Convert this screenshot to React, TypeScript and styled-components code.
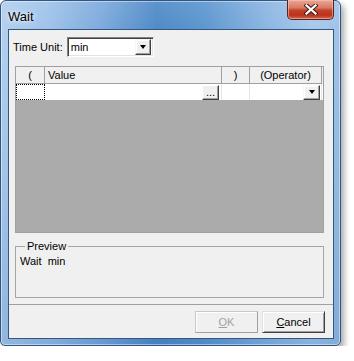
import React from "react";
import styled, { createGlobalStyle } from "styled-components";

const Global = createGlobalStyle`
  html, body { margin: 0; padding: 0; background: #ffffff; }
  body { font-family: "Liberation Sans", Arial, sans-serif; font-size: 11px; color: #000; }
  * { box-sizing: border-box; }
`;

const Window = styled.div`
  position: relative;
  width: 341px;
  height: 346px;
  display: flex;
  flex-direction: column;
  border: 1px solid #2f5785;
  border-radius: 6px 6px 5px 5px;
  background:
    linear-gradient(180deg, rgba(255,255,255,0.08) 0px, rgba(255,255,255,0) 28px, rgba(30,90,160,0.22) 100%),
    linear-gradient(90deg, #b4d0ee 0%, #a0c3ea 14%, #7daadc 30%, #508bc7 46%, #5e97d0 60%, #8cb6e2 78%, #a9caec 92%, #9fc2e8 100%);
  box-shadow: 3px 4px 6px rgba(0, 0, 0, 0.35), inset 0 0 0 1px rgba(255,255,255,0.45);
`;

const TitleBar = styled.div`
  height: 28px;
  display: flex;
  align-items: flex-start;
  justify-content: space-between;
  padding: 0 6px 0 7px;
`;

const Title = styled.span`
  font-family: "Liberation Sans", Arial, sans-serif;
  font-size: 13px;
  color: #000;
  line-height: 15px;
  padding-top: 8px;
  text-shadow: 0 0 6px rgba(255,255,255,0.9), 0 0 3px rgba(255,255,255,0.8);
`;

const CloseButton = styled.div`
  width: 47px;
  height: 20px;
  margin-top: -1px;
  display: flex;
  align-items: center;
  justify-content: center;
  border: 1px solid #5a2119;
  border-top: none;
  border-radius: 0 0 5px 5px;
  background: linear-gradient(180deg, #e8a897 0%, #d87b63 40%, #c5402a 55%, #b8321c 80%, #d06a4e 100%);
  box-shadow: inset 0 0 0 1px rgba(255, 200, 190, 0.55);
`;

const Client = styled.div`
  flex: 1;
  margin: 0 6px 6px 7px;
  display: flex;
  flex-direction: column;
  background: #f0f0f0;
  border: 1px solid #34577d;
`;

const Body = styled.div`
  flex: 1;
  display: flex;
  flex-direction: column;
  padding: 7px 9px 0 6px;
`;

const UnitRow = styled.div`
  display: flex;
  align-items: center;
  margin-left: -2px;
  gap: 4px;
`;

const Label = styled.span`
  font-size: 11px;
  line-height: 13px;
`;

const Combo = styled.div`
  width: 87px;
  height: 20px;
  display: flex;
  align-items: center;
  justify-content: space-between;
  background: #fff;
  border: 1px solid;
  border-color: #828282 #ffffff #ffffff #828282;
  box-shadow: inset 1px 1px 0 #404040, inset -1px -1px 0 #e3e3e3;
  padding: 2px 2px 2px 3px;
`;

const ComboText = styled.span`
  font-size: 11px;
  line-height: 13px;
`;

const ArrowButton = styled.div<{ $w: number; $h: number }>`
  width: ${(p) => p.$w}px;
  height: ${(p) => p.$h}px;
  display: flex;
  align-items: center;
  justify-content: center;
  background: #f0f0f0;
  border: 1px solid;
  border-color: #f8f8f8 #404040 #404040 #f8f8f8;
  box-shadow: inset -1px -1px 0 #a0a0a0, inset 1px 1px 0 #ffffff;
`;

const Triangle = styled.span`
  width: 0;
  height: 0;
  border-left: 3.5px solid transparent;
  border-right: 3.5px solid transparent;
  border-top: 4px solid #000;
`;

const Grid = styled.div`
  margin-top: 9px;
  height: 167px;
  display: flex;
  flex-direction: column;
  background: #ababab;
  border: 1px solid #a0a0a0;
`;

const GridRow = styled.div<{ $h: number; $bg: string }>`
  display: grid;
  grid-template-columns: 29px 177px 28px 72px;
  height: ${(p) => p.$h}px;
  background: ${(p) => p.$bg};
`;

const HeadCell = styled.div<{ $align: string }>`
  display: flex;
  align-items: center;
  justify-content: ${(p) => p.$align};
  padding-left: ${(p) => (p.$align === "flex-start" ? "3px" : "0")};
  border-right: 1px solid #a0a0a0;
  border-bottom: 1px solid #a0a0a0;
  font-size: 11px;
  line-height: 13px;
`;

const Cell = styled.div<{ $focus?: boolean }>`
  display: flex;
  align-items: center;
  justify-content: flex-end;
  background: #fff;
  border-right: 1px solid ${(p) => (p.$focus ? "transparent" : "#e6e6e6")};
  outline: ${(p) => (p.$focus ? "1px dotted #000" : "none")};
  outline-offset: -1px;
  padding-right: 1px;
`;

const EllipsisButton = styled.div`
  width: 17px;
  height: 15px;
  margin-right: 1px;
  display: flex;
  align-items: flex-end;
  justify-content: center;
  background: #f0f0f0;
  border: 1px solid;
  border-color: #ffffff #404040 #404040 #ffffff;
  box-shadow: inset -1px -1px 0 #a0a0a0;
  font-size: 11px;
  line-height: 11px;
  color: #000;
  padding-bottom: 1px;
`;

const Group = styled.fieldset`
  margin: 7px 0 0 0;
  padding: 0 4px;
  height: 58px;
  border: 1px solid #a5a5a5;
  border-radius: 0;
  min-width: 0;
`;

const Legend = styled.legend`
  padding: 0 2px;
  margin-left: 5px;
  font-size: 11px;
  line-height: 13px;
`;

const PreviewText = styled.div`
  font-size: 11px;
  line-height: 13px;
  white-space: pre;
  margin-top: 2px;
`;

const Footer = styled.div`
  display: flex;
  justify-content: flex-end;
  gap: 4px;
  padding: 6px 8px 5px 0;
  border-top: 1px solid #a0a0a0;
`;

const Button = styled.div<{ $disabled?: boolean }>`
  width: 63px;
  height: 22px;
  display: flex;
  align-items: center;
  justify-content: center;
  font-size: 11px;
  line-height: 13px;
  color: ${(p) => (p.$disabled ? "#a0a0a0" : "#000")};
  background: #f0f0f0;
  border: 1px solid;
  border-color: ${(p) =>
    p.$disabled ? "#c8c8c8 #a0a0a0 #a0a0a0 #c8c8c8" : "#e0e0e0 #404040 #404040 #e0e0e0"};
  box-shadow: ${(p) =>
    p.$disabled ? "inset 1px 1px 0 #ffffff" : "inset 1px 1px 0 #ffffff, inset -1px -1px 0 #a0a0a0"};
`;

const Access = styled.span`
  text-decoration: underline;
`;

export default function App() {
  return (
    <>
      <Global />
      <Window>
        <TitleBar>
          <Title>Wait</Title>
          <CloseButton>
            <svg width="14" height="11" viewBox="0 0 14 11">
              <path d="M2.5 1.5 L11.5 9.5 M11.5 1.5 L2.5 9.5" stroke="#3a1a14" strokeWidth="4.2" strokeLinecap="square" />
              <path d="M2.5 1.5 L11.5 9.5 M11.5 1.5 L2.5 9.5" stroke="#ffffff" strokeWidth="2.3" strokeLinecap="square" />
            </svg>
          </CloseButton>
        </TitleBar>
        <Client>
          <Body>
            <UnitRow>
              <Label>Time Unit:</Label>
              <Combo>
                <ComboText>min</ComboText>
                <ArrowButton $w={16} $h={16}>
                  <Triangle />
                </ArrowButton>
              </Combo>
            </UnitRow>
            <Grid>
              <GridRow $h={17} $bg="#f0f0f0">
                <HeadCell $align="center">(</HeadCell>
                <HeadCell $align="flex-start">Value</HeadCell>
                <HeadCell $align="center">)</HeadCell>
                <HeadCell $align="center">(Operator)</HeadCell>
              </GridRow>
              <GridRow $h={16} $bg="#ffffff">
                <Cell $focus />
                <Cell>
                  <EllipsisButton>...</EllipsisButton>
                </Cell>
                <Cell />
                <Cell>
                  <ArrowButton $w={17} $h={15}>
                    <Triangle />
                  </ArrowButton>
                </Cell>
              </GridRow>
            </Grid>
            <Group>
              <Legend>Preview</Legend>
              <PreviewText>{"Wait  min"}</PreviewText>
            </Group>
          </Body>
          <Footer>
            <Button $disabled>
              <span>
                <Access>O</Access>K
              </span>
            </Button>
            <Button>
              <span>
                <Access>C</Access>ancel
              </span>
            </Button>
          </Footer>
        </Client>
      </Window>
    </>
  );
}
